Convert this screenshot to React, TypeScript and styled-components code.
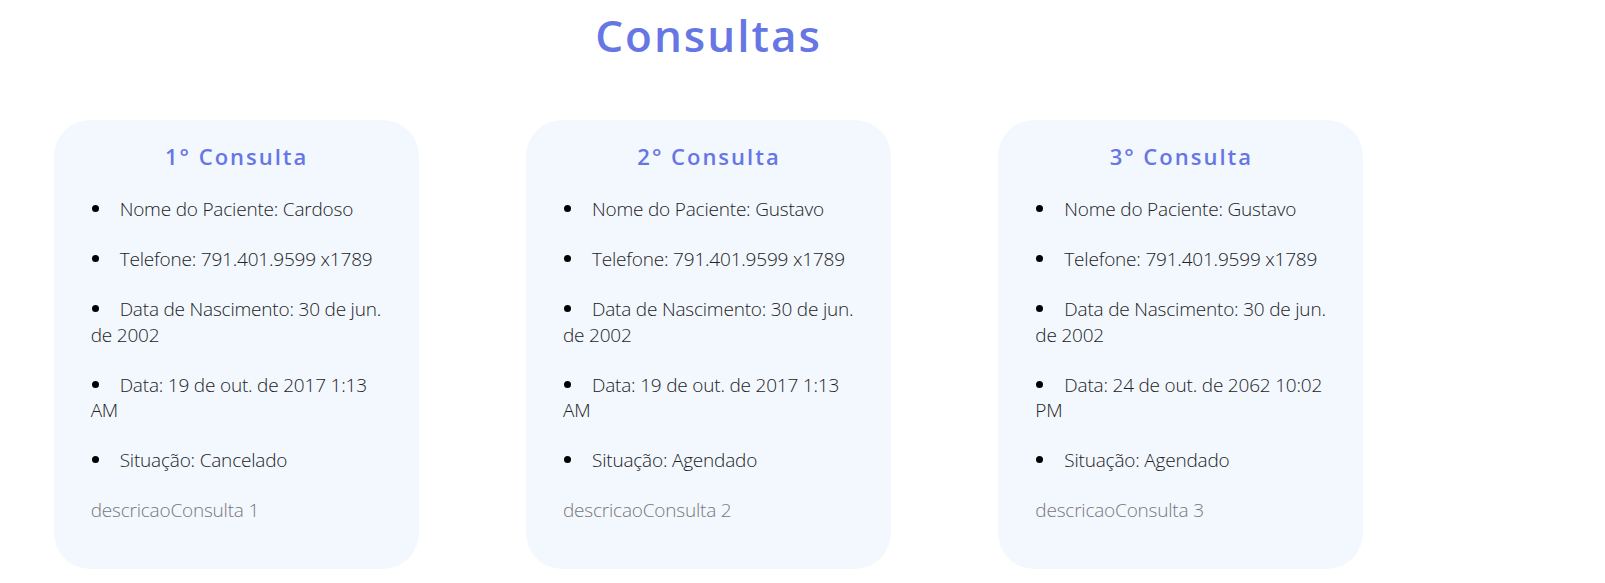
import React from "react";
import styled, { createGlobalStyle } from "styled-components";

const GlobalStyle = createGlobalStyle`
  html, body {
    margin: 0;
    padding: 0;
    background: #ffffff;
  }
  body {
    font-family: "Open Sans", "Noto Sans", "DejaVu Sans", sans-serif;
    color: #222222;
  }
`;

const Page = styled.main`
  width: 1417px;
  display: flex;
  flex-direction: column;
`;

const Title = styled.h1`
  margin: 5px 0 0;
  text-align: center;
  font-size: 44px;
  line-height: 60px;
  font-weight: 650;
  letter-spacing: 2px;
  color: #6676e4;
`;

const CardRow = styled.section`
  margin-top: 55px;
  display: flex;
  justify-content: space-around;
`;

const Card = styled.article`
  box-sizing: border-box;
  width: 365px;
  padding: 20px 36px 45px 37px;
  background: #f3f8ff;
  border-radius: 36px;
`;

const CardTitle = styled.h2`
  margin: 0;
  text-align: center;
  font-size: 22px;
  line-height: 32px;
  font-weight: 600;
  letter-spacing: 2px;
  color: #6676e4;
`;

const InfoList = styled.ul`
  margin: 25px 0 0;
  padding: 0;
  list-style: none;
`;

const InfoItem = styled.li`
  margin: 0 0 24.4px;
  font-size: 19px;
  letter-spacing: -0.2px;
  line-height: 25.6px;
  font-weight: 300;
  color: #222222;

  &::before {
    content: "";
    display: inline-block;
    width: 7px;
    height: 7px;
    border-radius: 50%;
    background: #000000;
    margin: 0 21px 0 1px;
    vertical-align: 4px;
  }
`;

const Description = styled.p`
  margin: 12px 0 0;
  font-size: 19px;
  letter-spacing: -0.2px;
  line-height: 25.6px;
  font-weight: 300;
  color: #777777;
`;

type Consulta = {
  numero: number;
  paciente: string;
  telefone: string;
  nascimento: string;
  data: string;
  situacao: string;
};

const consultas: Consulta[] = [
  {
    numero: 1,
    paciente: "Cardoso",
    telefone: "791.401.9599 x1789",
    nascimento: "30 de jun. de 2002",
    data: "19 de out. de 2017 1:13 AM",
    situacao: "Cancelado",
  },
  {
    numero: 2,
    paciente: "Gustavo",
    telefone: "791.401.9599 x1789",
    nascimento: "30 de jun. de 2002",
    data: "19 de out. de 2017 1:13 AM",
    situacao: "Agendado",
  },
  {
    numero: 3,
    paciente: "Gustavo",
    telefone: "791.401.9599 x1789",
    nascimento: "30 de jun. de 2002",
    data: "24 de out. de 2062 10:02 PM",
    situacao: "Agendado",
  },
];

export default function App() {
  return (
    <>
      <GlobalStyle />
      <Page>
        <Title>Consultas</Title>
        <CardRow>
          {consultas.map((c) => (
            <Card key={c.numero}>
              <CardTitle>{c.numero}° Consulta</CardTitle>
              <InfoList>
                <InfoItem>Nome do Paciente: {c.paciente}</InfoItem>
                <InfoItem>Telefone: {c.telefone}</InfoItem>
                <InfoItem>Data de Nascimento: {c.nascimento}</InfoItem>
                <InfoItem>Data: {c.data}</InfoItem>
                <InfoItem>Situação: {c.situacao}</InfoItem>
              </InfoList>
              <Description>descricaoConsulta {c.numero}</Description>
            </Card>
          ))}
        </CardRow>
      </Page>
    </>
  );
}
